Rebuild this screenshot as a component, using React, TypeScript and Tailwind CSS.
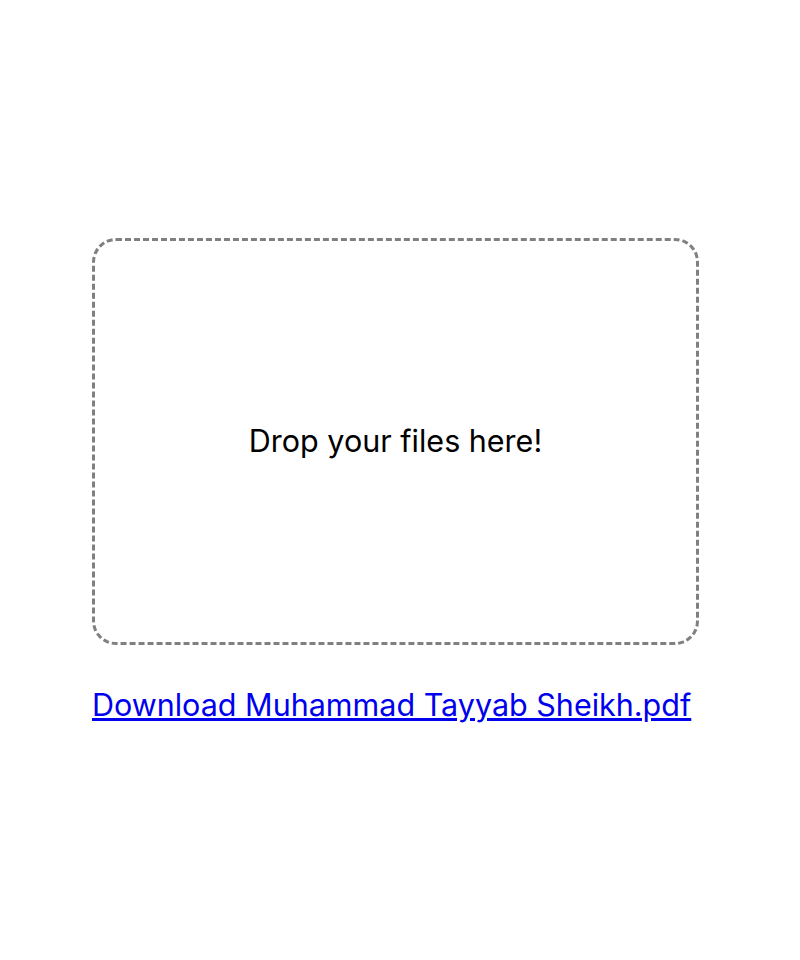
export default function App() {
  return (
    <div
      className="w-full h-[960px] bg-white flex flex-col justify-center"
      style={{ fontFamily: 'Inter, "Liberation Sans", sans-serif' }}
    >
      <div className="ml-[92px] w-[607px] flex flex-col items-start">
        <div className="w-full h-[407px] rounded-[24px] border-[3px] border-dashed border-[#808080] flex items-center justify-center">
          <p className="text-[30.5px] text-black">Drop your files here!</p>
        </div>
        <a
          href="#"
          className="mt-[42px] text-[30.5px] leading-[36px] text-[#0000ee] underline"
        >
          Download Muhammad Tayyab Sheikh.pdf
        </a>
      </div>
    </div>
  );
}
